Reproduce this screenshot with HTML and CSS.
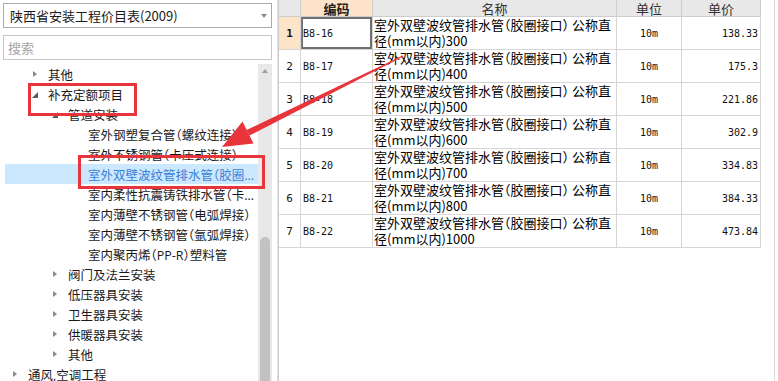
FILE: index.html
```html
<!DOCTYPE html>
<html lang="zh-CN">

<head>
    <meta charset="UTF-8">
    <meta name="viewport" content="width=device-width, initial-scale=1.0">
    <title>定额查询</title>

    <link rel="stylesheet" href="styles.css">
</head>

<body>
    <div class="app">
        <div class="side">
            <div class="combo">
                <span>陕西省安装工程价目表(2009)</span>
                <span class="caret"></span>
            </div>
            <input class="search" type="text" placeholder="搜索" />

            <div class="tree">
                <div class="nodes">
                    <div class="node lv1"><i class="tw shut"></i><span>其他</span></div>
                    <div class="node lv1"><i class="tw open"></i><span>补充定额项目</span></div>
                    <div class="node lv2"><i class="tw open"></i><span>管道安装</span></div>
                    <div class="node lv3"><i class="tw"></i><span>室外钢塑复合管（螺纹连接）</span></div>
                    <div class="node lv3"><i class="tw"></i><span>室外不锈钢管（卡压式连接）</span></div>
                    <div class="node lv3 on"><i class="tw"></i><span>室外双壁波纹管排水管（胶圈接口）</span></div>
                    <div class="node lv3"><i class="tw"></i><span>室内柔性抗震铸铁排水管（卡箍连接）</span></div>
                    <div class="node lv3"><i class="tw"></i><span>室内薄壁不锈钢管（电弧焊接）</span></div>
                    <div class="node lv3"><i class="tw"></i><span>室内薄壁不锈钢管（氩弧焊接）</span></div>
                    <div class="node lv3"><i class="tw"></i><span>室内聚丙烯（PP-R）塑料管</span></div>
                    <div class="node lv2"><i class="tw shut"></i><span>阀门及法兰安装</span></div>
                    <div class="node lv2"><i class="tw shut"></i><span>低压器具安装</span></div>
                    <div class="node lv2"><i class="tw shut"></i><span>卫生器具安装</span></div>
                    <div class="node lv2"><i class="tw shut"></i><span>供暖器具安装</span></div>
                    <div class="node lv2"><i class="tw shut"></i><span>其他</span></div>
                    <div class="node lv0"><i class="tw shut"></i><span>通风,空调工程</span></div>
                </div>
                <div class="vscroll">
                    <span class="up"></span>
                    <span class="thumb"></span>
                </div>
            </div>
        </div>

        <div class="grid">
            <table class="quota">
                <thead>
                    <tr>
                        <th class="c-no"></th>
                        <th class="c-code sorted">编码</th>
                        <th class="c-name">名称</th>
                        <th class="c-unit">单位</th>
                        <th class="c-price">单价</th>
                    </tr>
                </thead>
                <tbody>
                    <tr class="active">
                        <td class="no">1</td>
                        <td class="code current">B8-16</td>
                        <td class="name">室外双壁波纹管排水管（胶圈接口） 公称直<br>径(mm以内)300</td>
                        <td class="unit">10m</td>
                        <td class="price">138.33</td>
                    </tr>
                    <tr>
                        <td class="no">2</td>
                        <td class="code">B8-17</td>
                        <td class="name">室外双壁波纹管排水管（胶圈接口） 公称直<br>径(mm以内)400</td>
                        <td class="unit">10m</td>
                        <td class="price">175.3</td>
                    </tr>
                    <tr>
                        <td class="no">3</td>
                        <td class="code">B8-18</td>
                        <td class="name">室外双壁波纹管排水管（胶圈接口） 公称直<br>径(mm以内)500</td>
                        <td class="unit">10m</td>
                        <td class="price">221.86</td>
                    </tr>
                    <tr>
                        <td class="no">4</td>
                        <td class="code">B8-19</td>
                        <td class="name">室外双壁波纹管排水管（胶圈接口） 公称直<br>径(mm以内)600</td>
                        <td class="unit">10m</td>
                        <td class="price">302.9</td>
                    </tr>
                    <tr>
                        <td class="no">5</td>
                        <td class="code">B8-20</td>
                        <td class="name">室外双壁波纹管排水管（胶圈接口） 公称直<br>径(mm以内)700</td>
                        <td class="unit">10m</td>
                        <td class="price">334.83</td>
                    </tr>
                    <tr>
                        <td class="no">6</td>
                        <td class="code">B8-21</td>
                        <td class="name">室外双壁波纹管排水管（胶圈接口） 公称直<br>径(mm以内)800</td>
                        <td class="unit">10m</td>
                        <td class="price">384.33</td>
                    </tr>
                    <tr>
                        <td class="no">7</td>
                        <td class="code">B8-22</td>
                        <td class="name">室外双壁波纹管排水管（胶圈接口） 公称直<br>径(mm以内)1000</td>
                        <td class="unit">10m</td>
                        <td class="price">473.84</td>
                    </tr>
                </tbody>
            </table>
        </div>
    </div>

    <!-- red marks drawn over the screen -->
    <div class="mark mark-a"></div>
    <div class="mark mark-b"></div>
    <svg class="pointer" width="778" height="381" viewBox="0 0 778 381">
        <polygon points="403.3,56.5 402.7,55.5 246.5,130 249.5,135.5" fill="#e8353b" />
        <polygon points="222,147 242.5,121.5 253.5,143.5" fill="#e8353b" />
    </svg>
</body>

</html>
```

FILE: styles.css
```css
* {
    box-sizing: border-box;
}

body {
    margin: 0;
    width: 778px;
    height: 381px;
    overflow: hidden;
    position: relative;
    background: #fff;
    font-family: "Noto Sans CJK SC", "Microsoft YaHei", sans-serif;
    font-size: 13px;
    color: #1a1a1a;
}

.app {
    display: flex;
    height: 381px;
}

/* left panel */
.side {
    width: 278px;
    flex: none;
    display: flex;
    flex-direction: column;
    padding-top: 3px;
    border-right: 1px solid #e2e2e2;
}

.combo {
    margin-left: 3px;
    width: 269px;
    height: 25px;
    border: 1px solid #a9a9a9;
    display: flex;
    align-items: center;
    justify-content: space-between;
    padding: 0 4px 0 6px;
}

.caret {
    border-style: solid;
    border-width: 4px 3.5px 0;
    border-color: #8a8a8a transparent transparent;
}

.search {
    align-self: flex-start;
    margin: 7px 0 0 3px;
    width: 269px;
    height: 25px;
    border: 1px solid #c6c6c6;
    padding: 0 4px;
    font: inherit;
    outline: none;
}

.search::placeholder {
    color: #a5a5a5;
}

.tree {
    margin-top: 4px;
    flex: 1;
    min-height: 0;
    display: flex;
    padding-right: 5px;
    overflow: hidden;
}

.nodes {
    flex: 1;
    min-width: 0;
    padding-left: 5px;
    overflow: hidden;
    font-family: "Open Sans", "Noto Sans CJK SC", sans-serif;
    font-size: 12.5px;
    font-feature-settings: "halt";
}

.node {
    display: flex;
    align-items: center;
    height: 20px;
    white-space: nowrap;
    padding-right: 2px;
}

.node span {
    overflow: hidden;
    text-overflow: ellipsis;
}

.lv0 { padding-left: 6px; }
.lv1 { padding-left: 26px; }
.lv2 { padding-left: 46px; }
.lv3 { padding-left: 66px; }

.tw {
    flex: none;
    width: 17px;
    height: 20px;
    display: flex;
    align-items: center;
}

.tw.shut::before {
    content: "";
    margin-left: 2px;
    border-style: solid;
    border-width: 3.5px 0 3.5px 4px;
    border-color: transparent transparent transparent #8a8a8a;
}

.tw.open::before {
    content: "";
    margin: 2px 0 0 1px;
    border-style: solid;
    border-width: 0 0 6px 6px;
    border-color: transparent transparent #5a5a5a;
}

.node.on {
    background: #cce8ff;
    color: #3b7fd6;
}

.vscroll {
    width: 14px;
    flex: none;
    background: #e8e8e8;
    display: flex;
    flex-direction: column;
    align-items: center;
}

.up {
    margin-top: 5px;
    border-style: solid;
    border-width: 0 3.5px 4px;
    border-color: transparent transparent #a0a0a0;
}

.thumb {
    margin-top: auto;
    width: 10px;
    height: 144px;
    background: #c2c2c2;
    border-radius: 5px 5px 0 0;
}

/* right grid */
.grid {
    width: 497px;
    flex: none;
    border-left: 1px solid #cbcbcb;
    border-right: 1px solid #dcdcdc;
}

.quota {
    table-layout: fixed;
    border-collapse: separate;
    border-spacing: 0;
    width: 482px;
}

.c-no { width: 22px; }
.c-code { width: 72px; }
.c-name { width: 244px; }
.c-unit { width: 65px; }
.c-price { width: 79px; }

.quota th {
    height: 17px;
    padding: 0;
    background: #e8e8e8;
    border-right: 1px solid #cdcdcd;
    border-bottom: 1px solid #cdcdcd;
    font-weight: normal;
    font-size: 13px;
    line-height: 15px;
    color: #333;
    overflow: hidden;
}

.quota th.sorted {
    background: #fde4c8;
    font-weight: bold;
    color: #222;
}

.quota td {
    height: 33px;
    padding: 0;
    border-right: 1px solid #d6d6d6;
    border-bottom: 1px solid #d6d6d6;
    vertical-align: middle;
    font-family: "DejaVu Sans Mono", monospace;
    font-size: 10px;
    color: #111;
    white-space: nowrap;
    overflow: hidden;
}

.quota td.no {
    text-align: center;
    font-size: 11px;
}

.active td.no {
    background: #fde4c8;
    font-weight: bold;
}

.quota td.code {
    padding-left: 2px;
}

.quota td.current {
    box-shadow: inset 1px 0 0 #3d8ee8, inset 0 0 0 2px #6f6f6f;
}

.quota td.name {
    vertical-align: top;
    padding-left: 1px;
    font-family: "Noto Sans CJK SC", "Microsoft YaHei", sans-serif;
    font-size: 13px;
    line-height: 16px;
    font-feature-settings: "halt";
    color: #000;
}

.quota td.unit {
    text-align: center;
}

.quota td.price {
    text-align: right;
    padding-right: 2px;
}

/* annotation marks */
.mark {
    position: absolute;
    border: 3px solid #e8353b;
}

.mark-a {
    left: 28px;
    top: 83px;
    width: 109px;
    height: 33px;
}

.mark-b {
    left: 78px;
    top: 155px;
    width: 187px;
    height: 34px;
}

.pointer {
    position: absolute;
    left: 0;
    top: 0;
    pointer-events: none;
}
```
